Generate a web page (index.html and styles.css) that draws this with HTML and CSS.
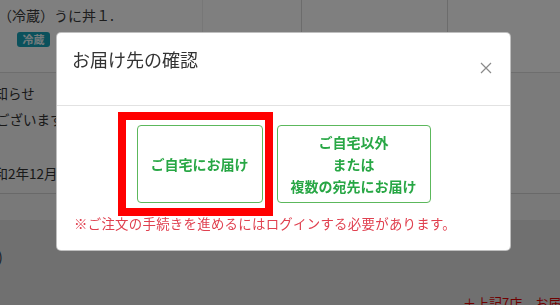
FILE: index.html
```html
<!DOCTYPE html>
<html lang="ja">
<head>
<meta charset="utf-8">
<title>お届け先の確認</title>
<link rel="stylesheet" href="styles.css">
</head>
<body>
<div class="page">
  <div class="row-item">
    <div class="col col-name">
      <div class="item-name">（冷蔵）うに丼１.</div>
      <span class="badge">冷蔵</span>
    </div>
    <div class="col col-a"></div>
    <div class="col col-b"></div>
    <div class="col col-c"></div>
  </div>
  <div class="row-info">
    <p class="info-line l1">お知らせ</p>
    <p class="info-line l2">ございます</p>
    <p class="info-line l3">令和2年12月2</p>
  </div>
  <div class="row-band"></div>
  <div class="row-foot">
    <p class="foot-paren">)</p>
    <p class="foot-link">＋上記7店　お届け</p>
  </div>
</div>

<div class="overlay">
  <div class="modal">
    <div class="modal-header">
      <h2 class="modal-title">お届け先の確認</h2>
      <button class="close" aria-label="閉じる">
        <svg width="12" height="12" viewBox="0 0 12 12"><path d="M1 1 L11 11 M11 1 L1 11" stroke="#8a8a8a" stroke-width="1.2" fill="none"/></svg>
      </button>
    </div>
    <div class="modal-body">
      <div class="choices">
        <button class="choice">ご自宅にお届け</button>
        <button class="choice">ご自宅以外<br>または<br>複数の宛先にお届け</button>
      </div>
      <p class="note">※ご注文の手続きを進めるにはログインする必要があります。</p>
    </div>
    <div class="highlight"></div>
  </div>
</div>
</body>
</html>
```
FILE: styles.css
```css
html, body {
  margin: 0;
  padding: 0;
  overflow: hidden;
  height: 305px;
}
body {
  font-family: "Noto Sans CJK JP", "Noto Sans", sans-serif;
  color: #333;
  background: #fff;
}
.page {
  width: 560px;
}
.row-item {
  display: grid;
  grid-template-columns: 202px 99px 146px 1fr;
  height: 72px;
  border-bottom: 1px solid #ddd;
  background: #fff;
}
.col-a { border-left: 1px solid #eee; }
.col-b { border-left: 1px solid #d8d8d8; }
.col-c { border-left: 1px solid #d8d8d8; }
.item-name {
  font-size: 14px;
  line-height: 20px;
  padding-top: 5px;
  margin-left: -2px;
  color: #3a3a3a;
}
.badge {
  display: inline-block;
  margin: 7px 0 0 17px;
  width: 33px;
  height: 15px;
  line-height: 15px;
  text-align: center;
  font-size: 11px;
  font-weight: bold;
  color: #e8f6f8;
  background: #17a2b8;
  border-radius: 3px;
}
.row-info {
  background: #f6f6f6;
  border-bottom: 1px solid #d2d2d2;
  padding-top: 10px;
  box-sizing: border-box;
  height: 121px;
}
.info-line {
  margin: 0;
  font-size: 13.5px;
  line-height: 20px;
  white-space: nowrap;
  color: #333;
}
.l1 { text-indent: -19px; }
.l2 { text-indent: -4px; margin-top: 6px; }
.l3 { text-indent: -19px; margin-top: 34px; }
.row-band {
  height: 26px;
  background: #f2f2f2;
}
.row-foot {
  background: #e0e0e0;
  height: 120px;
  padding-top: 26px;
  box-sizing: border-box;
}
.foot-paren {
  margin: 0 0 0 -2px;
  font-size: 14px;
  line-height: 20px;
  color: #2a3a4a;
}
.foot-link {
  margin: 27px 0 0 463px;
  font-size: 13px;
  line-height: 20px;
  white-space: nowrap;
  color: #e00000;
}

.overlay {
  position: fixed;
  inset: 0;
  background: rgba(0, 0, 0, 0.5);
}
.modal {
  position: relative;
  margin: 32px 0 0 56px;
  width: 455px;
  box-sizing: border-box;
  background: #fff;
  border: 1px solid rgba(0, 0, 0, 0.25);
  border-radius: 5px;
}
.modal-header {
  display: flex;
  justify-content: space-between;
  align-items: flex-start;
  height: 73px;
  box-sizing: border-box;
  padding: 13px 18px 0 15px;
  border-bottom: 1px solid #e2e2e2;
}
.modal-title {
  margin: 0;
  font-size: 18px;
  line-height: 27px;
  font-weight: 400;
  color: #333;
}
.close {
  margin-top: 16px;
  padding: 0;
  border: 0;
  background: none;
  width: 12px;
  height: 12px;
  display: block;
}
.close svg { display: block; }
.modal-body {
  padding: 19px 0 17px 17px;
}
.choices {
  display: flex;
  justify-content: center;
  gap: 14px;
  padding-right: 17px;
}
.choice {
  font-family: "Noto Sans CJK JP", "Noto Sans", sans-serif;
  font-size: 14px;
  font-weight: bold;
  line-height: 22px;
  color: #28a745;
  background: #fff;
  border: 1px solid #5cb85c;
  border-radius: 4px;
  padding: 5px 13px;
  margin: 0;
}
.note {
  margin: 10px 0 0;
  font-size: 13.4px;
  letter-spacing: 0.3px;
  line-height: 20px;
  color: #e0404f;
  white-space: nowrap;
}
.highlight {
  position: absolute;
  left: 61px;
  top: 79px;
  width: 155px;
  height: 104px;
  box-sizing: border-box;
  border: 8px solid #ff0000;
}
```
